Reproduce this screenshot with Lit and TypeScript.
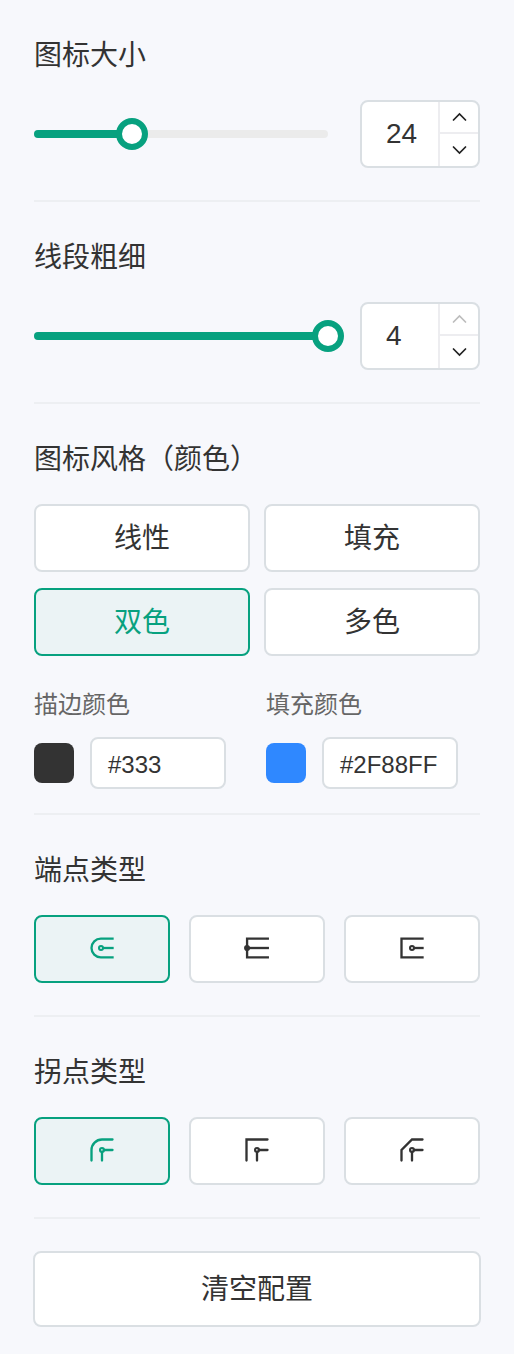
import { LitElement, html, css, svg } from "lit";
import { customElement, property, state } from "lit/decorators.js";
import { classMap } from "lit/directives/class-map.js";
import { styleMap } from "lit/directives/style-map.js";

const ICONS: Record<string, unknown> = {
  "cap-round": svg`<path d="M44 8H22C13.16 8 6 15.16 6 24C6 32.84 13.16 40 22 40H44"/><path d="M25 24H44"/><circle cx="22.3" cy="24" r="3.4" stroke-width="3.6"/>`,
  "cap-butt": svg`<path d="M44.5 8H7V40H44.5"/><path d="M10 24H44.5"/><circle cx="7" cy="24" r="3.4" stroke-width="3.6"/>`,
  "cap-square": svg`<path d="M44 8H6V40H44"/><path d="M27 24H44"/><circle cx="24" cy="24" r="3.4" stroke-width="3.6"/>`,
  "join-round": svg`<path stroke-linecap="round" d="M42 6H24C14.06 6 6 14.06 6 24V42"/><path stroke-linecap="round" d="M42 24H27M24 42V27"/><circle cx="24" cy="24" r="3.4" stroke-width="3.6"/>`,
  "join-miter": svg`<path stroke-linecap="round" d="M42 6H6V42"/><path stroke-linecap="round" d="M42 24H27M24 42V27"/><circle cx="24" cy="24" r="3.4" stroke-width="3.6"/>`,
  "join-bevel": svg`<path stroke-linecap="round" d="M42 6H24L6 24V42"/><path stroke-linecap="round" d="M42 24H27M24 42V27"/><circle cx="24" cy="24" r="3.4" stroke-width="3.6"/>`,
};

@customElement("value-slider")
class ValueSlider extends LitElement {
  @property({ type: Number }) percent = 0;

  static styles = css`
    :host { display: block; flex: 1; }
    .track { position: relative; height: 8px; border-radius: 4px; background: #ebebeb; }
    .fill { height: 8px; border-radius: 4px; background: #07a17f; }
    .knob {
      position: absolute; top: -12px; box-sizing: border-box;
      width: 32px; height: 32px; margin-left: -16px;
      border: 6px solid #07a17f; border-radius: 50%; background: #fff;
    }
  `;

  render() {
    return html`<div class="track">
      <div class="fill" style=${styleMap({ width: `${this.percent}%` })}></div>
      <div class="knob" style=${styleMap({ left: `${this.percent}%` })}></div>
    </div>`;
  }
}

@customElement("number-stepper")
class NumberStepper extends LitElement {
  @property({ type: Number }) value = 0;
  @property({ type: Boolean }) max = false;

  static styles = css`
    :host {
      display: flex; box-sizing: border-box; width: 120px; height: 68px;
      border: 2px solid #dadfe3; border-radius: 8px; background: #fff; overflow: hidden;
    }
    .value {
      flex: 1; padding-left: 24px; color: #333;
      font: 28px/64px "Liberation Sans", Arial, sans-serif;
    }
    .steps { display: flex; flex-direction: column; width: 38px; border-left: 2px solid #ededf0; }
    .step { display: flex; justify-content: center; align-items: center; color: #222; }
    .up { height: 30px; border-bottom: 2px solid #ededf0; }
    .down { height: 32px; }
    .disabled { color: #bdbdbd; }
    svg { display: block; width: 24px; height: 24px; }
  `;

  arrow(d: string) {
    return html`<svg viewBox="0 0 48 48" fill="none" stroke="currentColor" stroke-width="3.5" stroke-linecap="round"><path d=${d} /></svg>`;
  }

  render() {
    return html`<div class="value">${this.value}</div>
      <div class="steps">
        <div class=${classMap({ step: true, up: true, disabled: this.max })}>${this.arrow("M13 30L25 18L37 30")}</div>
        <div class="step down">${this.arrow("M13 18L25 30L37 18")}</div>
      </div>`;
  }
}

@customElement("app-root")
class AppRoot extends LitElement {
  @state() look = "双色";
  @state() cap = "cap-round";
  @state() join = "join-round";

  static styles = css`
    :host {
      display: block; box-sizing: border-box; height: 1354px; padding: 0 34px;
      background: #f7f8fc; color: #333;
      font-family: "Noto Sans CJK SC", sans-serif; font-size: 28px;
    }
    .section { padding: 32px 0; border-bottom: 2px solid #edeff2; }
    .compact { padding-bottom: 24px; }
    .title { height: 44px; line-height: 42px; margin-bottom: 24px; }
    .row { display: flex; align-items: center; gap: 32px; }
    .looks { display: grid; grid-template-columns: 1fr 1fr; gap: 16px 14px; }
    .shapes { display: grid; grid-template-columns: repeat(3, 1fr); gap: 19px; }
    .option {
      display: flex; justify-content: center; align-items: center;
      box-sizing: border-box; height: 68px; padding-bottom: 2px;
      border: 2px solid #dadfe3; border-radius: 8px; background: #fff; cursor: pointer;
    }
    .looks .option { padding-bottom: 4px; }
    .option.active { border-color: #07a17f; background: #ebf3f5; color: #07a17f; }
    .icon { display: block; width: 28px; height: 28px; }
    .colors { display: grid; grid-template-columns: 192px 192px; gap: 40px; margin-top: 32px; }
    .label { height: 33px; line-height: 30px; margin-bottom: 16px; font-size: 24px; color: #666; }
    .picker { display: flex; align-items: center; gap: 16px; }
    .swatch { width: 40px; height: 40px; border-radius: 8px; }
    .hex {
      box-sizing: border-box; width: 136px; height: 52px; padding-left: 16px;
      border: 2px solid #dadfe3; border-radius: 8px; background: #fff;
      font: 24px/52px "Liberation Sans", Arial, sans-serif;
    }
    .reset {
      display: flex; justify-content: center; align-items: center;
      box-sizing: border-box; height: 76px; margin: 32px -1px 0; padding-bottom: 4px;
      border: 2px solid #dadfe3; border-radius: 8px; background: #fff; cursor: pointer;
    }
  `;

  shape(name: string, current: string, pick: () => void) {
    return html`<div class=${classMap({ option: true, active: name === current })} @click=${pick}>
      <svg class="icon" viewBox="0 0 48 48" fill="none" stroke="currentColor" stroke-width="4">${ICONS[name]}</svg>
    </div>`;
  }

  color(label: string, value: string) {
    return html`<div>
      <div class="label">${label}</div>
      <div class="picker">
        <div class="swatch" style=${styleMap({ background: value })}></div>
        <div class="hex">${value}</div>
      </div>
    </div>`;
  }

  render() {
    return html`
      <div class="section">
        <div class="title">图标大小</div>
        <div class="row"><value-slider percent="33.333"></value-slider><number-stepper value="24"></number-stepper></div>
      </div>
      <div class="section">
        <div class="title">线段粗细</div>
        <div class="row"><value-slider percent="100"></value-slider><number-stepper value="4" max></number-stepper></div>
      </div>
      <div class="section compact">
        <div class="title">图标风格（颜色）</div>
        <div class="looks">
          ${["线性", "填充", "双色", "多色"].map(
            (name) => html`<div class=${classMap({ option: true, active: name === this.look })} @click=${() => (this.look = name)}>${name}</div>`
          )}
        </div>
        <div class="colors">${this.color("描边颜色", "#333")}${this.color("填充颜色", "#2F88FF")}</div>
      </div>
      <div class="section">
        <div class="title">端点类型</div>
        <div class="shapes">
          ${["cap-round", "cap-butt", "cap-square"].map((n) => this.shape(n, this.cap, () => (this.cap = n)))}
        </div>
      </div>
      <div class="section">
        <div class="title">拐点类型</div>
        <div class="shapes">
          ${["join-round", "join-miter", "join-bevel"].map((n) => this.shape(n, this.join, () => (this.join = n)))}
        </div>
      </div>
      <div class="reset">清空配置</div>
    `;
  }
}
